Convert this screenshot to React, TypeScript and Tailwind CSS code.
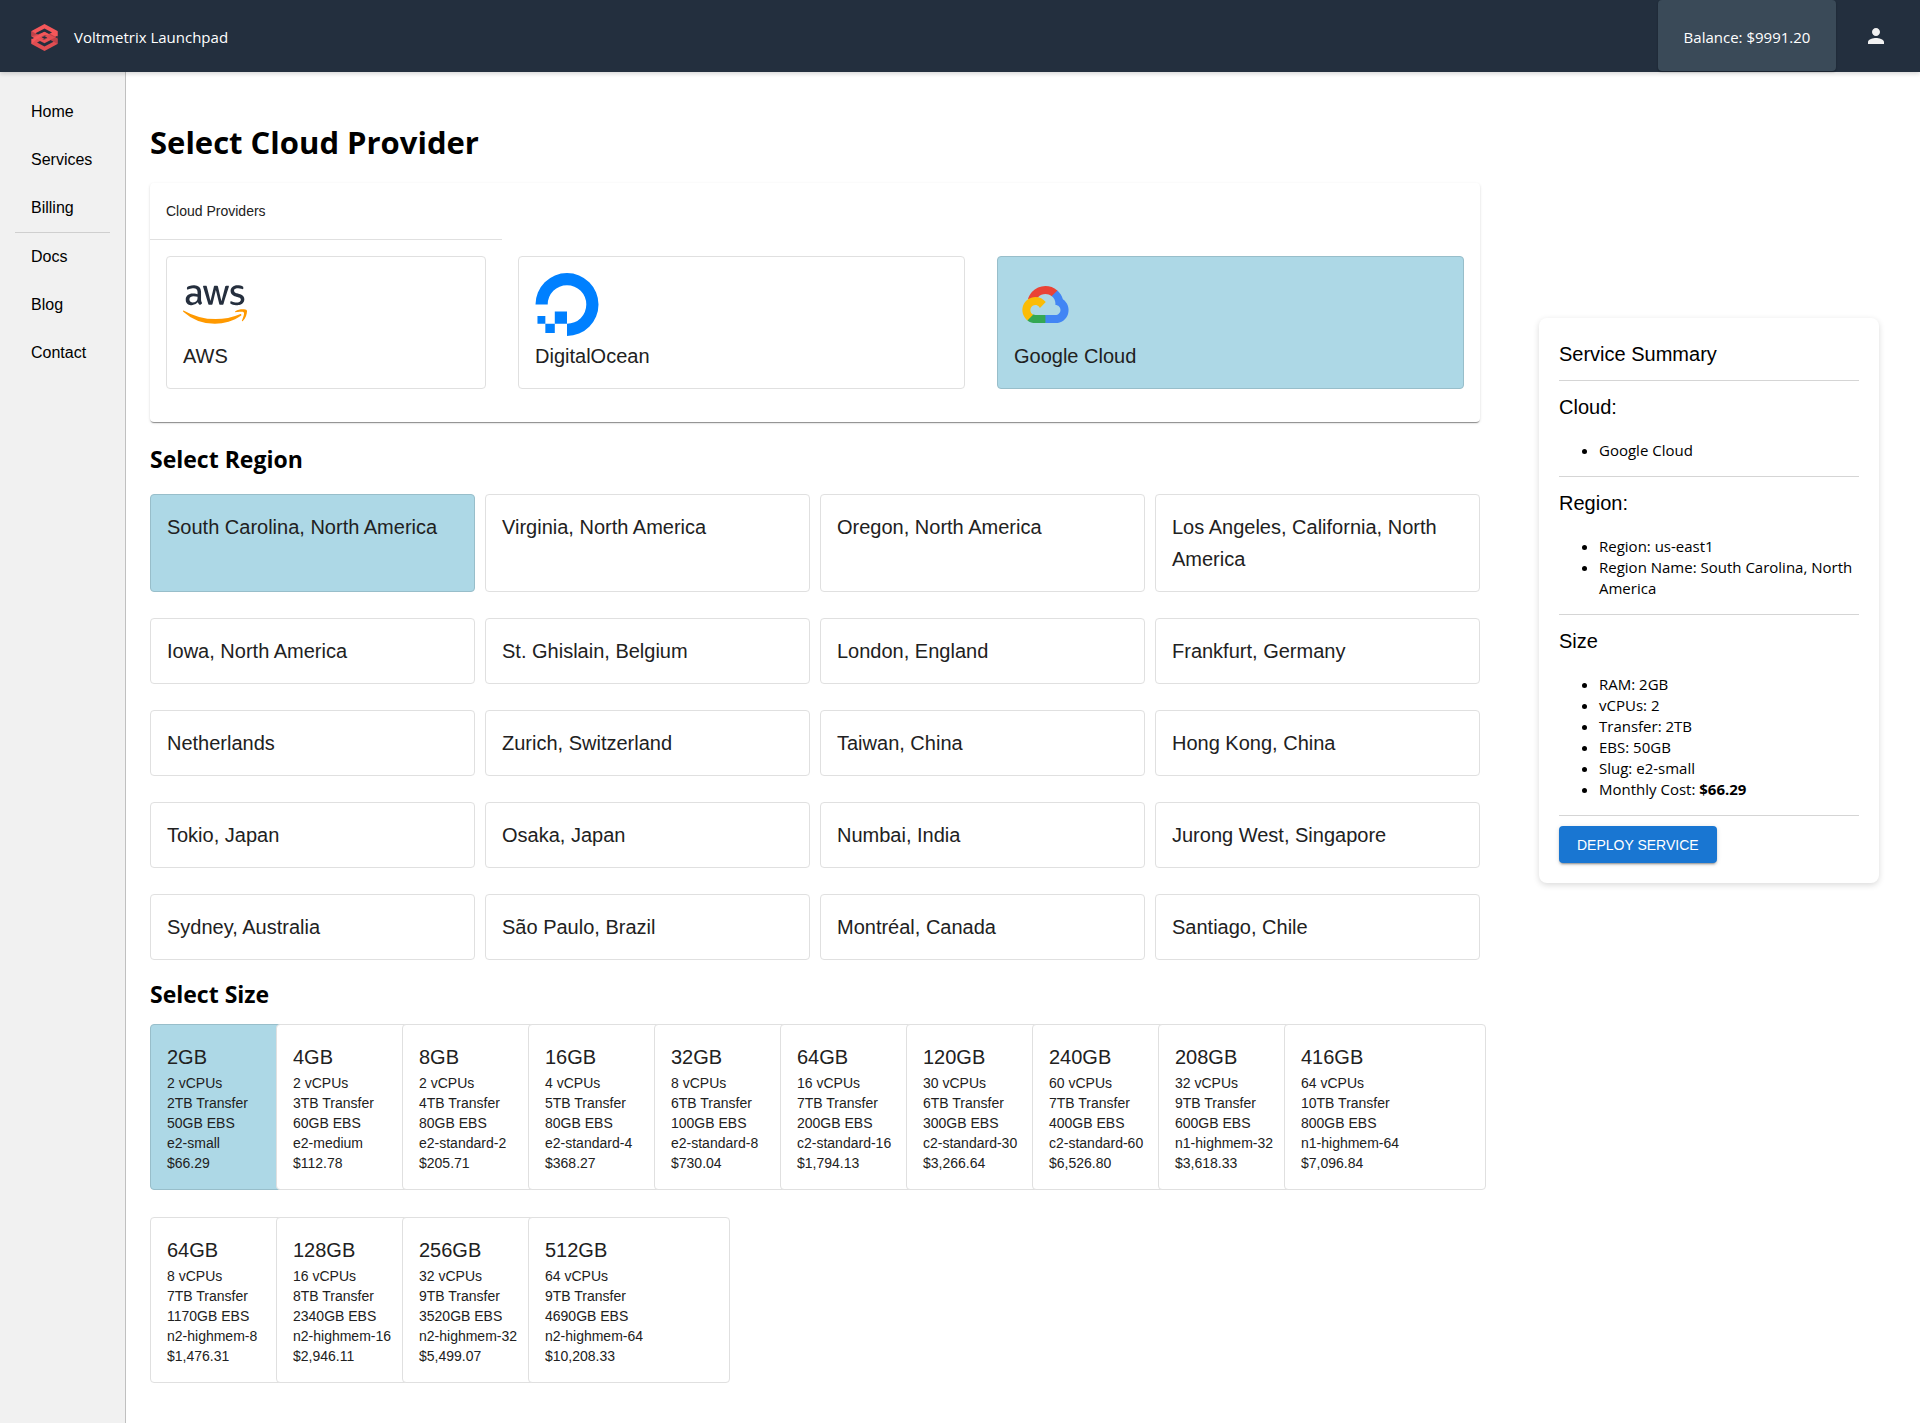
import { useState } from "react";
import type { ReactNode } from "react";
import { FaAws } from "react-icons/fa";
import { MdPerson } from "react-icons/md";

const UI = "font-['Open_Sans','Noto_Sans',sans-serif]";

function BrandMark() {
  return (
    <svg viewBox="0 0 26 27" className="size-[27px]" aria-hidden="true">
      <g id="brand-half">
        <path d="M0 7L13 0L26 7V12L21 14.5L13 10.5L5 14.5L0 12Z" fill="#f4575a" />
        <path d="M0 7L4 9.5L6.5 11L13 14.5L7 17L0 13Z" fill="#bf4149" />
        <path d="M4 9.3L13 4.6L20.5 8.5L17.5 10L13 7.8L6.8 11Z" fill="#232f3e" />
        <path d="M26 7V12.5L13 19L10 17.5L20.5 12Z" fill="#f4575a" />
      </g>
      <g transform="rotate(180 13 13.5)">
        <path d="M0 7L13 0L26 7V12L21 14.5L13 10.5L5 14.5L0 12Z" fill="#e04e52" />
        <path d="M0 7L4 9.5L6.5 11L13 14.5L7 17L0 13Z" fill="#bf4149" />
        <path d="M4 9.3L13 4.6L20.5 8.5L17.5 10L13 7.8L6.8 11Z" fill="#232f3e" />
        <path d="M26 7V12.5L13 19L10 17.5L20.5 12Z" fill="#f4575a" />
      </g>
      <path d="M13 8.5L26 14.5V12.5L13 18.5L0 12.5L13 8Z" fill="#f4575a" fillOpacity="0.6" />
      <path d="M10.3 13.5L13 12.2L15.7 13.5L13 14.8Z" fill="#232f3e" />
      <path d="M0 12.8L2.5 14L0 15.2ZM26 11.8L23.5 13L26 14.2Z" fill="#232f3e" />
    </svg>
  );
}

function AwsLogo() {
  return (
    <>
      <svg width="0" height="0" className="absolute" aria-hidden="true">
        <linearGradient id="aws-fill" x1="0" y1="0" x2="0" y2="1">
          <stop offset="0.57" stopColor="#252f3e" />
          <stop offset="0.57" stopColor="#ff9900" />
        </linearGradient>
      </svg>
      <FaAws className="size-16" fill="url(#aws-fill)" aria-hidden="true" />
    </>
  );
}

function DigitalOceanLogo() {
  return (
    <svg viewBox="0 0 64 64" className="size-16" fill="#0080ff" aria-hidden="true">
      <path d="M0 32A32 32 0 1 1 32 64V51.6A19.6 19.6 0 1 0 12.4 32Z" />
      <path d="M19.6 39.2H32V51.6H19.6ZM10 51.6H19.6V61H10ZM2 43.6H10V51.6H2Z" />
    </svg>
  );
}

function GoogleCloudLogo() {
  return (
    <svg viewBox="-406 -665 3250 3250" className="size-16" aria-hidden="true">
      <path fill="#ea4335" d="M1513.8 528.7h72.8l207.4-207.4 10.2-88c-385.9-340.6-975-303.9-1315.6 82C393.9 422.5 325.2 550 287.8 688c23.1-9.5 48.7-11 72.8-4.4l414.7-68.4s21.1-34.9 32-32.7c184.5-202.6 495-226.2 708-53.8h-1.5z" />
      <path fill="#4285f4" d="M2089.4 688c-47.7-175.5-145.5-333.3-281.6-454l-291 291c122.9 100.4 192.9 251.7 189.9 410.4v51.7c143.1 0 259 116 259 259 0 143.1-116 259-259 259h-518.1l-51.7 52.4v310.7l51.7 51.7h518.1c297 2.3 560.5-190.2 648.7-473.8 88-283.6-20.4-591.4-266.9-757.7z" />
      <path fill="#34a853" d="M669.8 1917h518.1v-414.7H669.8c-36.9 0-73.4-7.9-107-23.3l-72.8 22.5-208.8 207.4-18.2 72.8c117.1 88.4 259.9 136 406.7 135.3z" />
      <path fill="#fbbc05" d="M669.8 571.6c-287.8 1.7-542.7 186-634.5 458.9-91.8 272.8-.3 573.7 227.8 749.1l300.5-300.5c-130.4-58.9-188.3-212.3-129.5-342.7 58.9-130.4 212.3-188.3 342.7-129.5 57.4 26 103.4 72 129.4 129.5l300.5-300.5C1078.9 668.6 880.2 570.9 669.8 571.6z" />
    </svg>
  );
}

const providers = [
  { name: "AWS", logo: <AwsLogo /> },
  { name: "DigitalOcean", logo: <DigitalOceanLogo /> },
  { name: "Google Cloud", logo: <GoogleCloudLogo /> },
];

const regions = [
  "South Carolina, North America",
  "Virginia, North America",
  "Oregon, North America",
  "Los Angeles, California, North America",
  "Iowa, North America",
  "St. Ghislain, Belgium",
  "London, England",
  "Frankfurt, Germany",
  "Netherlands",
  "Zurich, Switzerland",
  "Taiwan, China",
  "Hong Kong, China",
  "Tokio, Japan",
  "Osaka, Japan",
  "Numbai, India",
  "Jurong West, Singapore",
  "Sydney, Australia",
  "São Paulo, Brazil",
  "Montréal, Canada",
  "Santiago, Chile",
];

const sizes = [
  ["2GB", "2", "2TB", "50GB", "e2-small", "$66.29"],
  ["4GB", "2", "3TB", "60GB", "e2-medium", "$112.78"],
  ["8GB", "2", "4TB", "80GB", "e2-standard-2", "$205.71"],
  ["16GB", "4", "5TB", "80GB", "e2-standard-4", "$368.27"],
  ["32GB", "8", "6TB", "100GB", "e2-standard-8", "$730.04"],
  ["64GB", "16", "7TB", "200GB", "c2-standard-16", "$1,794.13"],
  ["120GB", "30", "6TB", "300GB", "c2-standard-30", "$3,266.64"],
  ["240GB", "60", "7TB", "400GB", "c2-standard-60", "$6,526.80"],
  ["208GB", "32", "9TB", "600GB", "n1-highmem-32", "$3,618.33"],
  ["416GB", "64", "10TB", "800GB", "n1-highmem-64", "$7,096.84"],
  ["64GB", "8", "7TB", "1170GB", "n2-highmem-8", "$1,476.31"],
  ["128GB", "16", "8TB", "2340GB", "n2-highmem-16", "$2,946.11"],
  ["256GB", "32", "9TB", "3520GB", "n2-highmem-32", "$5,499.07"],
  ["512GB", "64", "9TB", "4690GB", "n2-highmem-64", "$10,208.33"],
];

function OptionCard({
  selected,
  onClick,
  className = "",
  children,
}: {
  selected: boolean;
  onClick: () => void;
  className?: string;
  children: ReactNode;
}) {
  const tone = selected ? "bg-[#add8e6] border-[#98beca]" : "bg-white border-[#e0e0e0]";
  return (
    <button
      type="button"
      aria-pressed={selected}
      onClick={onClick}
      className={`flex cursor-pointer flex-col items-start rounded-sm border p-4 text-left text-[#212121] ${tone} ${className}`}
    >
      {children}
    </button>
  );
}

function NavLink({ label }: { label: string }) {
  return (
    <a href={`#${label.toLowerCase()}`} className="block px-4 py-3 leading-6 text-black">
      {label}
    </a>
  );
}

function SummaryBlock({ title, children }: { title: string; children: ReactNode }) {
  return (
    <section className="border-b border-[#d5d5d5] pb-[15px]">
      <h3 className="mt-[10px] text-xl leading-8">{title}</h3>
      <ul className={`mt-[17px] list-disc pl-10 text-[15px] leading-[21px] ${UI}`}>{children}</ul>
    </section>
  );
}

export default function App() {
  const [provider, setProvider] = useState("Google Cloud");
  const [region, setRegion] = useState(0);
  const [size, setSize] = useState(0);
  const [ram, cpus, transfer, ebs, slug, cost] = sizes[size];

  return (
    <div className="flex min-h-screen flex-col bg-white font-['Liberation_Sans',Arial,sans-serif] text-black">
      <header className={`relative z-10 flex h-[72px] items-start bg-[#232f3e] text-[15px] text-white shadow-[0_2px_4px_rgba(0,0,0,0.15)] ${UI}`}>
        <a href="#home" className="flex h-full items-center gap-4 pt-0.5 pl-[31px]">
          <BrandMark />
          <span>Voltmetrix Launchpad</span>
        </a>
        <button
          type="button"
          className="ml-auto h-[71px] w-[178px] rounded-sm bg-[#3a4a58] pt-1 shadow-[0_1px_2px_rgba(0,0,0,0.3)]"
        >
          Balance: $9991.20
        </button>
        <button type="button" aria-label="Account" className="mr-8 ml-7 flex h-full items-center text-[#f1f1f1]">
          <MdPerson className="size-6" />
        </button>
      </header>

      <div className="flex grow">
        <nav className="w-[126px] shrink-0 border-r border-[#c0c0c0] bg-[#f1f1f1] px-[15px] pt-4">
          <NavLink label="Home" />
          <NavLink label="Services" />
          <NavLink label="Billing" />
          <hr className="border-[#cfcfcf]" />
          <NavLink label="Docs" />
          <NavLink label="Blog" />
          <NavLink label="Contact" />
        </nav>

        <main className="flex min-w-0 grow gap-[59px] pr-[41px] pb-10 pl-6">
          <div className="min-w-0 grow">
            <h1 className={`mt-12 text-[31px] leading-[44px] font-bold ${UI}`}>Select Cloud Provider</h1>

            <section className="mt-[19px] rounded-sm pb-[33px] shadow-[0_2px_1px_-1px_rgba(0,0,0,0.3),0_1px_1px_0_rgba(0,0,0,0.14),0_1px_3px_0_rgba(0,0,0,0.12)]">
              <div className="grid grid-cols-[352fr_479fr_499fr]">
                <h2 className="border-b border-[#e0e0e0] p-4 text-sm leading-6 text-[#212121]">Cloud Providers</h2>
              </div>
              <div className="grid grid-cols-[352fr_479fr_499fr] pt-4">
                {providers.map(({ name, logo }) => (
                  <div key={name} className="flex px-4">
                    <OptionCard selected={provider === name} onClick={() => setProvider(name)} className="h-[133px] grow">
                      {logo}
                      <span className="pt-1 text-xl leading-8">{name}</span>
                    </OptionCard>
                  </div>
                ))}
              </div>
            </section>

            <h2 className={`mt-[21px] text-[23px] leading-8 font-bold ${UI}`}>Select Region</h2>
            <div className="mt-[19px] grid grid-cols-4 gap-x-[10px] gap-y-[26px]">
              {regions.map((name, i) => (
                <OptionCard key={name} selected={region === i} onClick={() => setRegion(i)}>
                  <span className="text-xl leading-8">{name}</span>
                </OptionCard>
              ))}
            </div>

            <h2 className={`mt-[18px] text-[23px] leading-8 font-bold ${UI}`}>Select Size</h2>
            <div className="mt-[14px] flex flex-wrap gap-y-[27px]">
              {sizes.map(([mem, cpu, tx, disk, id, price], i) => (
                <OptionCard
                  key={id}
                  selected={size === i}
                  onClick={() => setSize(i)}
                  className="-mr-[76px] w-[202px] text-sm leading-5"
                >
                  <span className="text-xl leading-8">{mem}</span>
                  <span>{cpu} vCPUs</span>
                  <span>{tx} Transfer</span>
                  <span>{disk} EBS</span>
                  <span>{id}</span>
                  <span>{price}</span>
                </OptionCard>
              ))}
            </div>
          </div>

          <aside className="mt-[246px] w-[340px] shrink-0 self-start rounded-lg p-5 shadow-[0_2px_6px_rgba(0,0,0,0.15)]">
            <h2 className="border-b border-[#d5d5d5] pb-[10px] text-xl leading-8">Service Summary</h2>
            <SummaryBlock title="Cloud:">
              <li>{provider}</li>
            </SummaryBlock>
            <SummaryBlock title="Region:">
              <li>Region: us-east1</li>
              <li>{`Region Name: ${regions[region]}`}</li>
            </SummaryBlock>
            <SummaryBlock title="Size">
              <li>RAM: {ram}</li>
              <li>vCPUs: {cpus}</li>
              <li>Transfer: {transfer}</li>
              <li>EBS: {ebs}</li>
              <li>Slug: {slug}</li>
              <li>
                Monthly Cost: <strong>{cost}</strong>
              </li>
            </SummaryBlock>
            <button
              type="button"
              className="mt-[10px] h-[37px] rounded-sm bg-[#1976d2] px-[18px] text-sm text-white shadow-[0_3px_1px_-2px_rgba(0,0,0,0.2),0_2px_2px_0_rgba(0,0,0,0.14),0_1px_5px_0_rgba(0,0,0,0.12)]"
            >
              DEPLOY SERVICE
            </button>
          </aside>
        </main>
      </div>
    </div>
  );
}
